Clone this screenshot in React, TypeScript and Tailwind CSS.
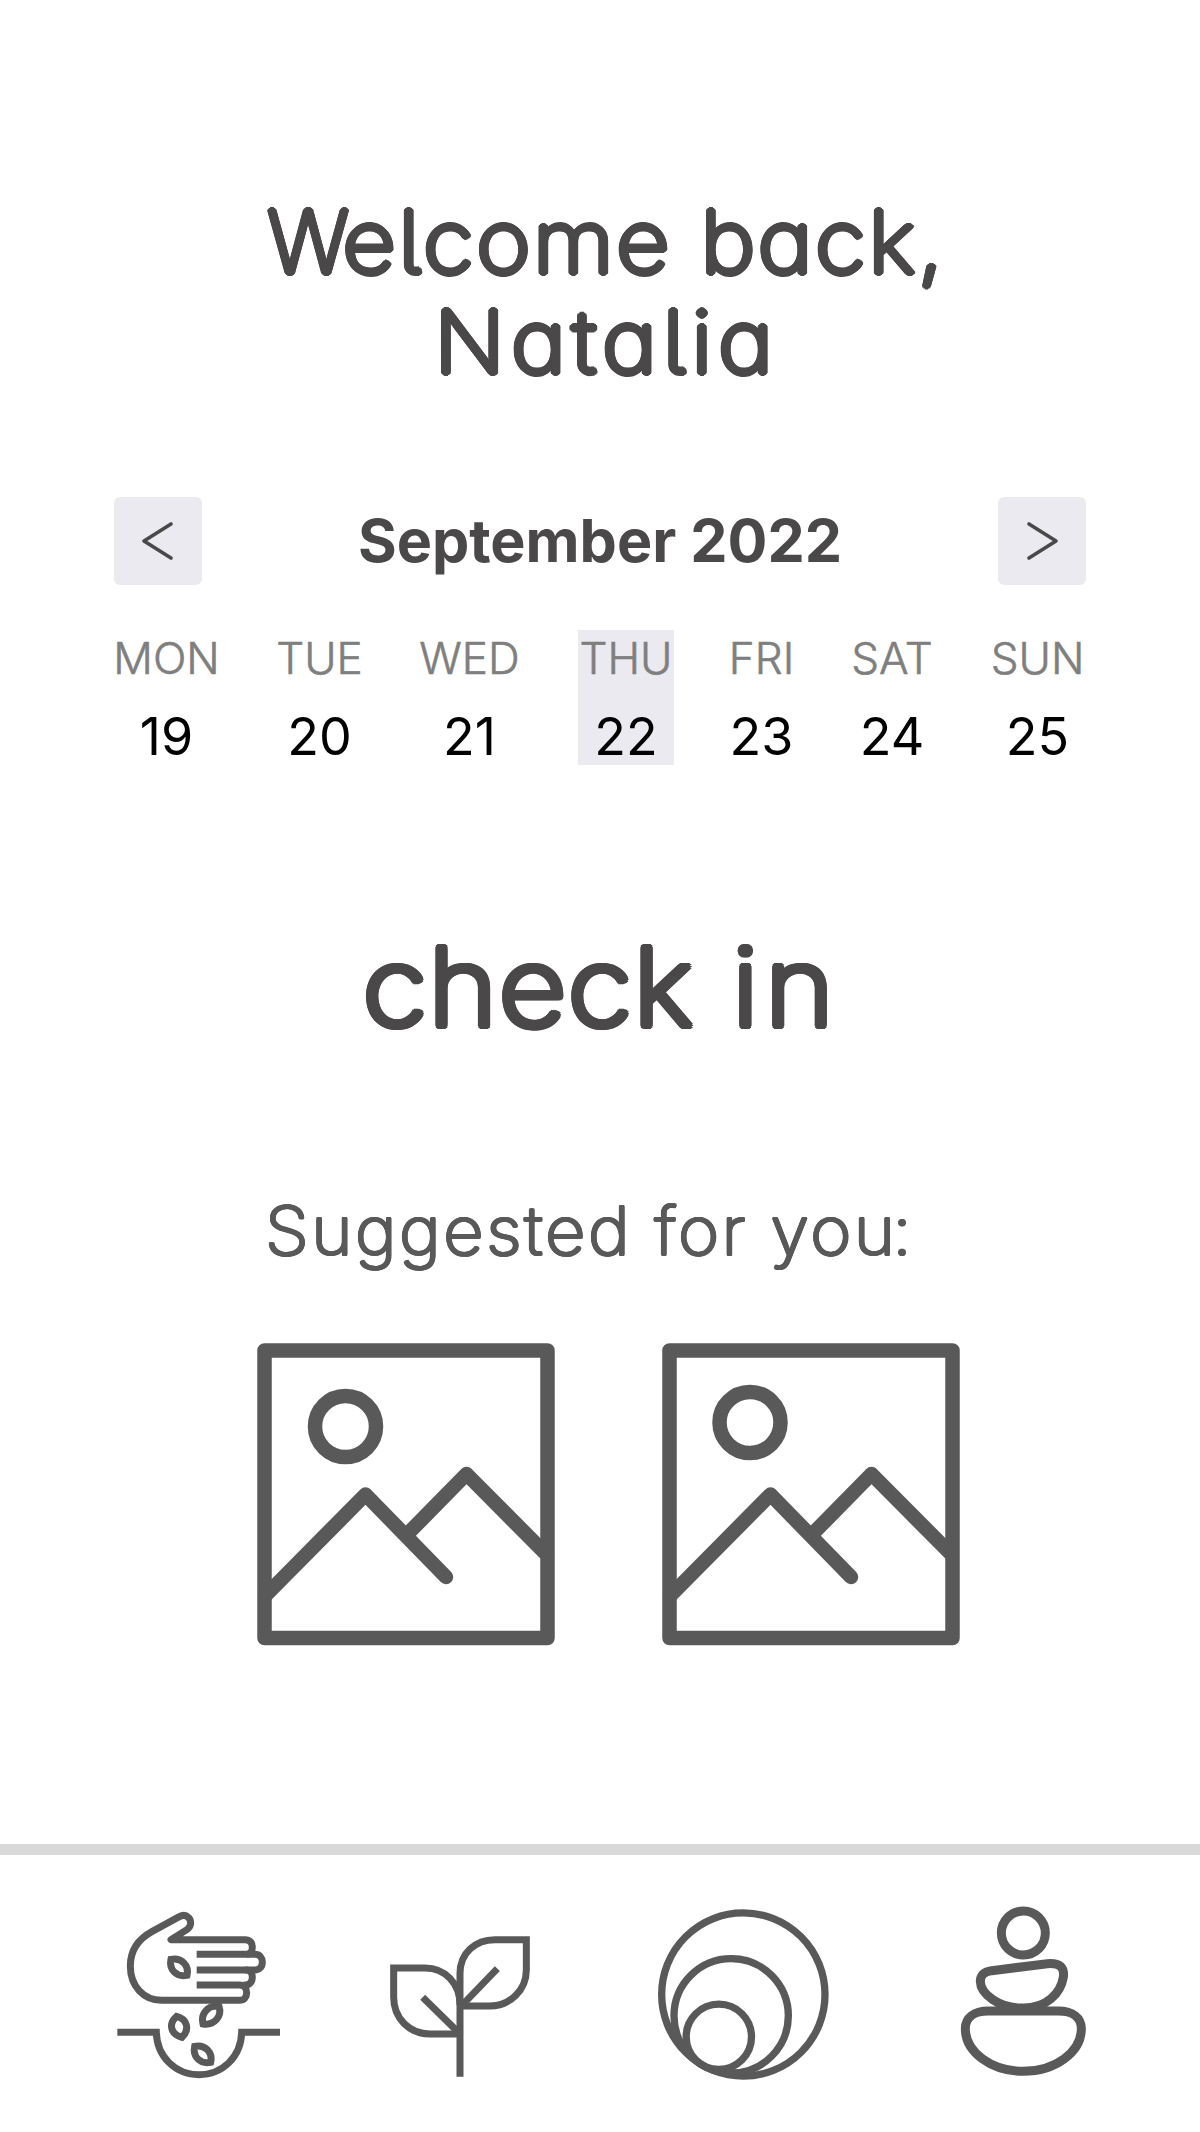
import React from "react";

type Day = { name: string; date: number; box: string; active?: boolean };

const days: Day[] = [
  { name: "MON", date: 19, box: "w-[105px]" },
  { name: "TUE", date: 20, box: "w-[89px]" },
  { name: "WED", date: 21, box: "w-[99px]" },
  { name: "THU", date: 22, box: "ml-[3px] w-24", active: true },
  { name: "FRI", date: 23, box: "w-[63px]" },
  { name: "SAT", date: 24, box: "w-[86px]" },
  { name: "SUN", date: 25, box: "w-[93px]" },
];

// A ring of shadows around thin letters gives them soft, rounded stroke ends.
const roundedBold =
  "font-extralight [font-feature-settings:'cv11','cv05'] [text-shadow:0.03em_0_0,0.026em_0.015em_0,0.015em_0.026em_0,0_0.03em_0,-0.015em_0.026em_0,-0.026em_0.015em_0,-0.03em_0_0,-0.026em_-0.015em_0,-0.015em_-0.026em_0,0_-0.03em_0,0.015em_-0.026em_0,0.026em_-0.015em_0]";
const roundedLight =
  "font-extralight [font-feature-settings:'cv11','cv05'] [text-shadow:0.018em_0_0,0.013em_0.013em_0,0_0.018em_0,-0.013em_0.013em_0,-0.018em_0_0,-0.013em_-0.013em_0,0_-0.018em_0,0.013em_-0.013em_0]";

function ArrowButton({ label, points }: { label: string; points: string }) {
  return (
    <button
      aria-label={label}
      className="flex h-[88px] w-[88px] items-center justify-center rounded-md bg-[#ebeaf0]"
    >
      <svg width="34" height="40" viewBox="0 0 34 40" fill="none" stroke="#4a4849" strokeWidth="3.6" strokeLinecap="round" strokeLinejoin="round">
        <polyline points={points} />
      </svg>
    </button>
  );
}

function PictureCard({ sunX, sunY }: { sunX: number; sunY: number }) {
  return (
    <svg width="298" height="303" viewBox="0 0 298 303" fill="none" stroke="#595959" strokeWidth="14.5" strokeLinecap="round" strokeLinejoin="round">
      <rect x="7.5" y="7.5" width="283" height="287.5" />
      <circle cx={sunX} cy={sunY} r="30.5" />
      <path d="M8 253 L108.5 151.5 L189 234" />
      <path d="M153 188.5 L209.5 131 L290 212" />
    </svg>
  );
}

function PlantingHandIcon() {
  return (
    <svg width="200" height="200" viewBox="0 0 600 600" fill="none" stroke="#595959" strokeWidth="21">
      <path
        strokeLinejoin="round"
        d="M290 285 H418 C433 285 440 295 440 308 C440 322 433 331 418 331 H185 C130 331 91 288 91 228 C91 180 118 145 157 124 L238 80 C247 75 258 75 266 83 C274 92 275 108 262 118 L213 149 H435 C449 149 457 158 457 171 C457 184 449 193 440 193"
      />
      <path d="M290 193 H464 C479 193 487 203 487 216 C487 230 479 240 464 240 H290" />
      <path strokeLinecap="round" d="M440 240 C451 241 457 250 457 262 C457 276 449 285 435 285" />
      <path d="M213 208 C245 202 268 226 261 256 C229 262 206 238 213 208 Z" />
      <path d="M284 469 C316 463 339 487 332 517 C300 523 277 499 284 469 Z" />
      <path d="M357 349 C325 344 301 371 309 402 C343 407 367 379 357 349 Z" />
      <path d="M230 379 C262 387 270 418 246 442 C212 433 204 402 230 379 Z" />
      <path d="M52 427 H169 C171 500 226 554 297 554 C368 554 423 500 425 427 H540" />
    </svg>
  );
}

function SproutIcon() {
  return (
    <svg className="mt-5" width="180" height="180" viewBox="0 0 540 540" fill="none" stroke="#595959" strokeWidth="21">
      <path d="M270 500 V190 C270 130 315 89 375 89 H469 V180 C469 240 420 288 360 288 H275" />
      <path d="M275 287 L382 176" />
      <path d="M270 372 H180 C118 372 71 325 71 262 V174 H165 C225 174 270 220 270 285" />
      <path d="M265 367 L158 262" />
    </svg>
  );
}

function NestedCirclesIcon() {
  return (
    <svg width="200" height="200" viewBox="0 0 600 600" fill="none" stroke="#595959" strokeWidth="22">
      <circle cx="310" cy="313.5" r="245" />
      <circle cx="273.5" cy="377.5" r="171.5" />
      <circle cx="236.5" cy="440.5" r="98" />
    </svg>
  );
}

function StonesIcon() {
  return (
    <svg width="170" height="200" viewBox="0 0 510 600" fill="none" stroke="#595959" strokeWidth="27">
      <circle cx="250" cy="129" r="66" />
      <path d="M155 242 L322 221 C360 218 374 232 370 262 C362 310 320 354 250 354 C175 356 122 310 121 275 C121 256 130 246 155 242 Z" />
      <path d="M145 363 H355 C398 363 424 383 424 416 C424 487 345 544 250 544 C155 544 76 487 76 416 C76 383 102 363 145 363 Z" />
    </svg>
  );
}

export default function App() {
  return (
    <div className="flex h-[2132px] w-[1200px] flex-col overflow-hidden bg-white font-[Inter,'Liberation_Sans',sans-serif] text-[#4a4849]">
      <main className="flex h-[1844px] flex-col">
        <h1 className={`mt-[193px] text-center text-[86px] leading-[99.5px] whitespace-nowrap ${roundedBold}`}>
          <span className="block scale-x-[1.08] pl-[6px] tracking-[2.2px]">
            <span className="mr-[-8px] inline-block origin-right scale-x-[0.93]">W</span>elcome back,
          </span>
          <span className="block scale-x-[1.08] pl-3 tracking-[5.4px]">Natalia</span>
        </h1>

        <section className="mt-[105px]">
          <div className="mx-[114px] flex items-center justify-between">
            <ArrowButton label="Previous week" points="30,3 3,20 30,37" />
            <h2 className="text-[59.2px] leading-[88px] font-bold whitespace-nowrap">September 2022</h2>
            <ArrowButton label="Next week" points="4,3 31,20 4,37" />
          </div>
          <div className="mt-[45px] ml-[114px] flex gap-14">
            {days.map((day) => (
              <div
                key={day.name}
                className={`flex h-[135px] flex-col items-center whitespace-nowrap ${day.box} ${day.active ? "bg-[#ebeaf0]" : ""}`}
              >
                <span className="h-[56px] text-[44px] leading-[56px] font-light text-[#7f7f7f] [-webkit-text-stroke:0.6px_#7f7f7f]">{day.name}</span>
                <span className="mt-[21px] text-[52px] leading-[60px] font-normal text-black">{day.date}</span>
              </div>
            ))}
          </div>
        </section>

        <h2 className={`mt-[151px] scale-x-[1.08] pl-[3px] text-center text-[109px] leading-[140px] tracking-[1.2px] [word-spacing:3px] whitespace-nowrap ${roundedBold}`}>
          check <span className="tracking-[6px]">in</span>
        </h2>

        <section className="mt-[135px]">
          <h3 className={`ml-[265px] origin-left scale-x-105 text-[67px] leading-[80px] tracking-[2.35px] whitespace-nowrap text-[#595959] ${roundedLight}`}>
            Suggested for you<span className="ml-[-5px]">:</span>
          </h3>
          <div className="mt-[72px] ml-[257px] flex gap-[107px]">
            <PictureCard sunX={88.5} sunY={83.5} />
            <PictureCard sunX={88} sunY={79.5} />
          </div>
        </section>
      </main>

      <nav className="flex h-[288px] items-start border-t-[11px] border-[#d9d9d9] pt-[35px] pl-[100px]">
        <PlantingHandIcon />
        <div className="ml-[70px]"><SproutIcon /></div>
        <div className="ml-[90px]"><NestedCirclesIcon /></div>
        <div className="ml-[100px]"><StonesIcon /></div>
      </nav>
    </div>
  );
}
